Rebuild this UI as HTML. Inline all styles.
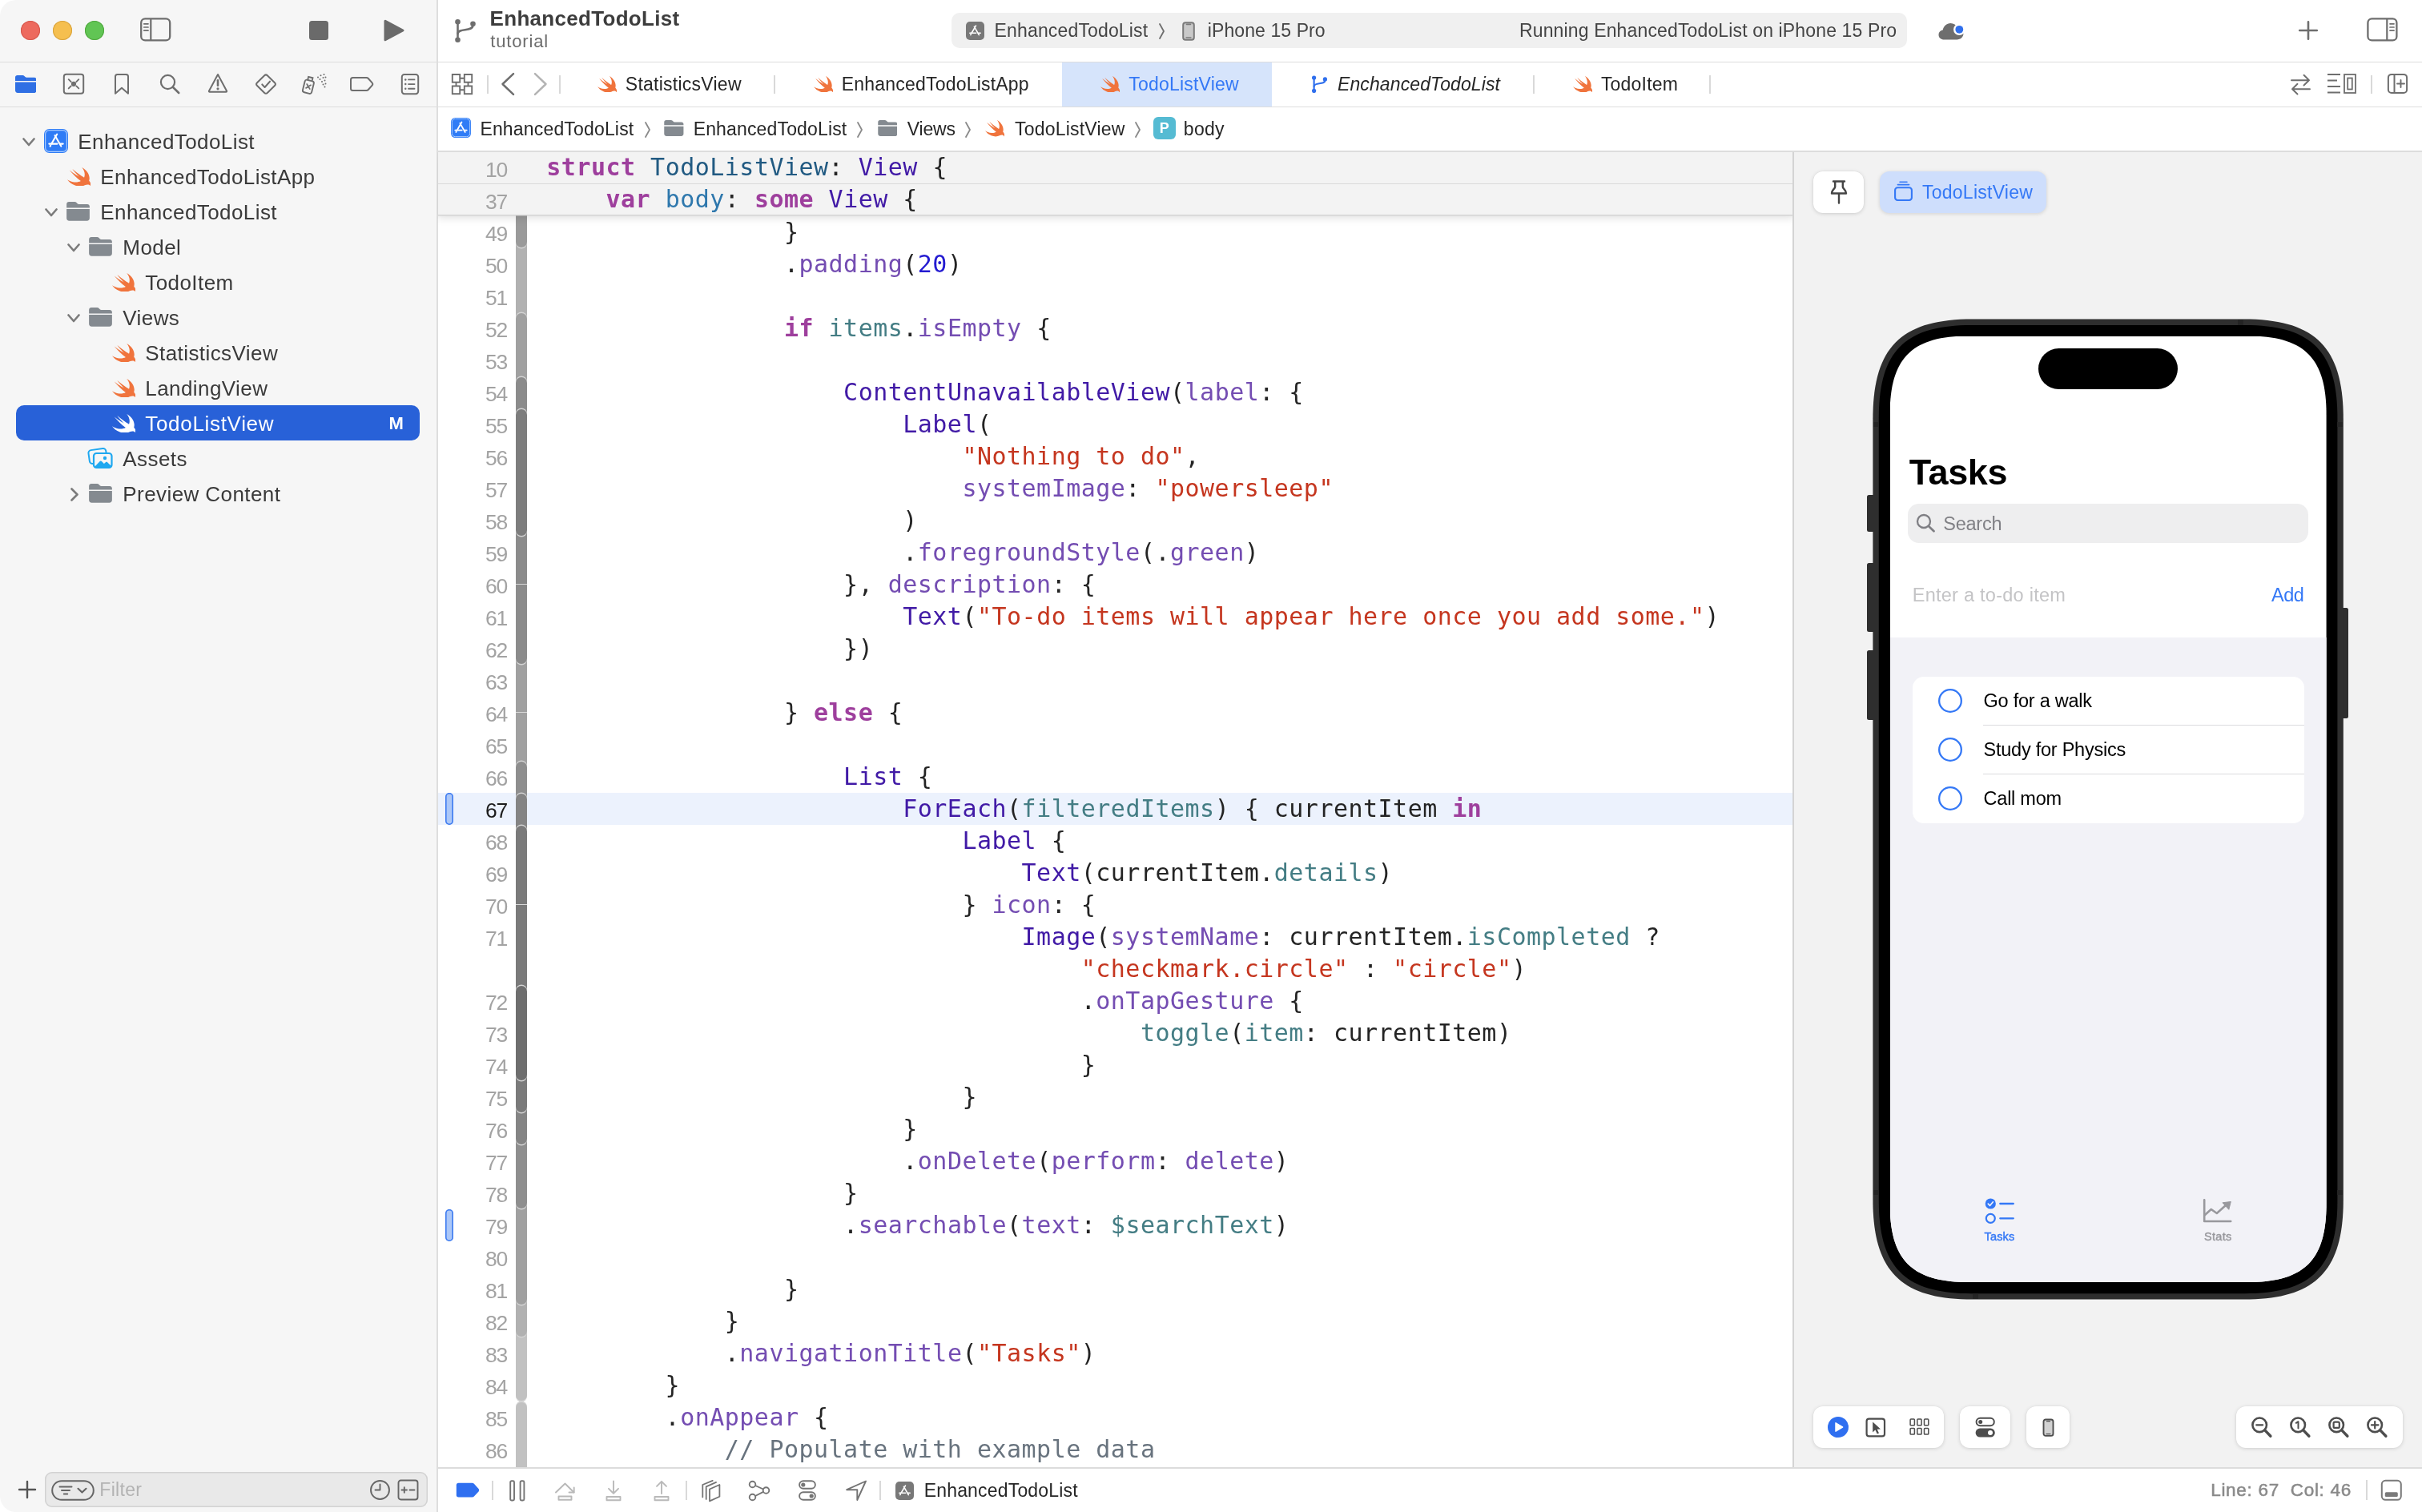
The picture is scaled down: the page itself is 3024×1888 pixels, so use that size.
<!DOCTYPE html>
<html lang="en"><head><meta charset="utf-8"><title>Xcode — TodoListView</title>
<style>
html,body{margin:0;padding:0}
#app{position:absolute;left:0;top:0;width:3024px;height:1888px;will-change:transform}
body{width:3024px;height:1888px;position:relative;overflow:hidden;background:#ffffff;font-family:"Liberation Sans",sans-serif;-webkit-font-smoothing:antialiased}
.cl{position:absolute;font-family:"DejaVu Sans Mono","Liberation Mono",monospace;font-size:30px;line-height:1;letter-spacing:0.479px;color:#242424;white-space:pre}
.ln{position:absolute;left:560px;width:73.200px;text-align:right;font-size:26.500px;line-height:1;color:#a3a3a3;letter-spacing:-1.100px;white-space:pre}
.cl .k{color:#9e3f9d;font-weight:700}
.cl .t{color:#215a82}
.cl .d{color:#2f78ad}
.cl .c{color:#411aa6}
.cl .m{color:#744db2}
.cl .p{color:#447d84}
.cl .s{color:#c5361f}
.cl .n{color:#241bd1}
.cl .x{color:#68737e}
</style></head>
<body>
<div id="app">
<div style="position:absolute;left:0px;top:0px;width:545px;height:1888px;background:#f6f6f6;border-radius:20px 0 0 20px;"></div>
<div style="position:absolute;left:545px;top:0px;width:1.5px;height:1888px;background:#d8d8d8;"></div>
<div style="position:absolute;left:0px;top:76.5px;width:3024px;height:1.5px;background:#dddddd;"></div>
<div style="position:absolute;left:0px;top:132.5px;width:3024px;height:1.5px;background:#dddddd;"></div>
<div style="position:absolute;left:546.5px;top:188.3px;width:2478px;height:1.5px;background:#dddddd;"></div>
<div style="position:absolute;left:545px;top:0px;width:1.5px;height:1888px;background:#dedede;"></div>
<div style="position:absolute;left:25.7px;top:25.7px;width:24.4px;height:24.4px;border-radius:50%;background:#ed6a5e;box-shadow:inset 0 0 0 1px #d5584d;"></div>
<div style="position:absolute;left:65.7px;top:25.7px;width:24.4px;height:24.4px;border-radius:50%;background:#f5bf4f;box-shadow:inset 0 0 0 1px #d8a33e;"></div>
<div style="position:absolute;left:105.7px;top:25.7px;width:24.4px;height:24.4px;border-radius:50%;background:#61c554;box-shadow:inset 0 0 0 1px #50a73f;"></div>
<svg style="position:absolute;left:174px;top:21px;" width="41" height="32" viewBox="0 0 41 32"><rect x="2.2" y="2.400" width="36" height="27" rx="5" fill="none" stroke="#6e6e6e" stroke-width="2.300"/><path d="M14.300 2.400V29.400" stroke="#6e6e6e" stroke-width="2.200"/><path d="M5.800 8.800H11M5.800 13H11M5.800 17.200H11" stroke="#6e6e6e" stroke-width="1.700" stroke-linecap="round"/></svg>
<div style="position:absolute;left:386px;top:25.8px;width:24px;height:24px;background:#6a6a6a;border-radius:3.500px;"></div>
<svg style="position:absolute;left:478px;top:23px;" width="28" height="30" viewBox="0 0 28 30"><path d="M3 3.200L25 15L3 26.800Z" fill="#6a6a6a" stroke="#6a6a6a" stroke-width="3" stroke-linejoin="round"/></svg>
<svg style="position:absolute;left:566.5px;top:22.8px;" width="28" height="31" viewBox="0 0 28 31"><g fill="none" stroke="#6e6e6e" stroke-width="2.6" stroke-linecap="round"><path d="M4.500 6.500V24.500"/><path d="M23.500 8.500C23.500 17 4.500 11.500 4.500 19"/></g><g fill="#6e6e6e"><circle cx="4.500" cy="4.200" r="3.3"/><circle cx="4.500" cy="26.800" r="3.3"/><circle cx="23.500" cy="6.800" r="3.3"/></g></svg>
<span style="position:absolute;left:611.6px;top:10.19px;font-size:26px;line-height:1;color:#3d3d3d;font-weight:700;letter-spacing:0.3px;white-space:pre;">EnhancedTodoList</span>
<span style="position:absolute;left:612.2px;top:40.68px;font-size:22px;line-height:1;color:#6c6c6c;font-weight:400;letter-spacing:0.85px;white-space:pre;">tutorial</span>
<div style="position:absolute;left:1187.8px;top:16px;width:1193.5px;height:43.5px;background:#f0f0f0;border-radius:10px;"></div>
<svg style="position:absolute;left:1206px;top:26.8px;" width="23" height="23" viewBox="0 0 30 30"><rect x="0" y="0" width="30" height="30" rx="6.5" fill="#787878"/><g stroke="#fff" stroke-width="2.1" stroke-linecap="round" fill="none"><path d="M16.2 6.600L9.300 18.600"/><path d="M13.600 8.200L21.300 21.600"/><path d="M6.300 18.600H16.500"/><path d="M20.600 18.600H23.700"/><path d="M8.200 20.600L7.600 21.600"/></g></svg>
<span style="position:absolute;left:1241.6px;top:26.73px;font-size:23px;line-height:1;color:#444444;font-weight:400;letter-spacing:0.15px;white-space:pre;">EnhancedTodoList</span>
<svg style="position:absolute;left:1446.5px;top:28.5px;" width="7" height="20" viewBox="0 0 7 20"><path d="M1 1L6 10L1 19" fill="none" stroke="#6e6e6e" stroke-width="1.800" stroke-linecap="round" stroke-linejoin="round"/></svg>
<svg style="position:absolute;left:1476px;top:26.5px;" width="16" height="24" viewBox="0 0 16 24"><rect x="1.2" y="1.2" width="13.600" height="21.600" rx="3" fill="#c9c9c9" stroke="#7a7a7a" stroke-width="2"/><path d="M5.500 3.400H10.500" stroke="#7a7a7a" stroke-width="1.600" stroke-linecap="round"/><path d="M5 20H11" stroke="#7a7a7a" stroke-width="1.300" stroke-linecap="round"/></svg>
<span style="position:absolute;left:1507.8px;top:26.73px;font-size:23px;line-height:1;color:#444444;font-weight:400;letter-spacing:0.09px;white-space:pre;">iPhone 15 Pro</span>
<span style="position:absolute;left:1897px;top:26.73px;font-size:23px;line-height:1;color:#444444;font-weight:400;letter-spacing:0.14px;white-space:pre;">Running EnhancedTodoList on iPhone 15 Pro</span>
<svg style="position:absolute;left:2419px;top:26px;" width="36" height="26" viewBox="0 0 36 26"><path d="M8.500 23.500C4.300 23.500 1.500 21 1.500 17.500c0-3.100 2.200-5.400 5.200-5.900C7.500 6.600 11.500 3 16.400 3c3.800 0 7 2.100 8.600 5.300 4.300.3 7.500 3.400 7.500 7.500 0 4.400-3.500 7.700-8.200 7.700z" fill="#6e6e6e"/><circle cx="27.300" cy="10.800" r="7.300" fill="#fff"/><circle cx="27.300" cy="10.800" r="4.900" fill="#2f6fed"/></svg>
<svg style="position:absolute;left:2869px;top:25px;" width="26" height="26" viewBox="0 0 26 26"><path d="M13 2.200V23.800M2.200 13H23.800" stroke="#6e6e6e" stroke-width="2.600" stroke-linecap="round"/></svg>
<svg style="position:absolute;left:2954px;top:21px;" width="41" height="32" viewBox="0 0 41 32"><rect x="2.400" y="2.400" width="36" height="27" rx="5" fill="none" stroke="#6e6e6e" stroke-width="2.300"/><path d="M26.300 2.400V29.400" stroke="#6e6e6e" stroke-width="2.200"/><path d="M30 8.800H35M30 13H35M30 17.200H35" stroke="#6e6e6e" stroke-width="1.700" stroke-linecap="round"/></svg>
<svg style="position:absolute;left:18.8px;top:94px;" width="26.5" height="22" viewBox="0 0 29 24"><path d="M3 0h7.2c1 0 1.6.3 2.3 1l1.2 1.2c.5.5 1 .7 1.8.7H26c1.8 0 3 1.2 3 3v1.6H0V3c0-1.8 1.2-3 3-3z M0 9.2h29v11.3c0 2.1-1.3 3.5-3.4 3.5H3.4C1.3 24 0 22.6 0 20.5z" fill="#2f6fe4"/></svg>
<svg style="position:absolute;left:78px;top:91.2px;" width="28" height="28" viewBox="0 0 28 28"><rect x="1.800" y="1.800" width="24.400" height="24" rx="3" fill="none" stroke="#6e6e6e" stroke-width="2"/><path d="M7.700 8.200L10.700 11.200M20.300 8.200L17.300 11.200M7.700 19.400L10.700 16.400M20.300 19.400L17.300 16.400" stroke="#6e6e6e" stroke-width="1.900" stroke-linecap="round"/><circle cx="14" cy="13.800" r="3.100" fill="#6e6e6e"/></svg>
<svg style="position:absolute;left:142px;top:91.2px;" width="20" height="28" viewBox="0 0 20 28"><path d="M2 4.500c0-1.500 1-2.500 2.500-2.500h11c1.500 0 2.500 1 2.500 2.500V25.800L10 18.800 2 25.800z" fill="none" stroke="#6e6e6e" stroke-width="2" stroke-linejoin="round"/></svg>
<svg style="position:absolute;left:199px;top:92px;" width="27" height="26" viewBox="0 0 27 26"><circle cx="10.500" cy="10.500" r="8.600" fill="none" stroke="#6e6e6e" stroke-width="2.200"/><path d="M16.800 16.800L24.200 24" stroke="#6e6e6e" stroke-width="2.600" stroke-linecap="round"/></svg>
<svg style="position:absolute;left:259px;top:91px;" width="26" height="26" viewBox="0 0 26 26"><path d="M13 2L24 22.500c.3.600 0 1.200-.7 1.200H2.700c-.7 0-1-.6-.7-1.200z" fill="none" stroke="#6e6e6e" stroke-width="2" stroke-linejoin="round"/><path d="M13 9.300V15.800" stroke="#6e6e6e" stroke-width="2.600" stroke-linecap="round"/><circle cx="13" cy="19.800" r="1.600" fill="#6e6e6e"/></svg>
<svg style="position:absolute;left:318px;top:91.2px;transform:translateY(0.600px) scaleY(1.035);" width="28" height="27" viewBox="0 0 28 27"><path d="M14 2.200c.7 0 1.200.2 1.800.8l9.400 9c.8.800.8 2.200 0 3l-9.400 9c-.6.600-1.100.8-1.800.8s-1.200-.2-1.800-.8l-9.400-9c-.8-.8-.8-2.200 0-3l9.400-9c.6-.6 1.100-.8 1.800-.8z" fill="none" stroke="#6e6e6e" stroke-width="2"/><path d="M9.300 13.800l3.300 3.400 6.400-7" fill="none" stroke="#6e6e6e" stroke-width="2" stroke-linecap="round" stroke-linejoin="round"/></svg>
<svg style="position:absolute;left:376px;top:91px;" width="33" height="28" viewBox="0 0 33 28"><g transform="rotate(14 10 16)"><rect x="3.500" y="9.500" width="11.500" height="16" rx="2.500" fill="none" stroke="#6e6e6e" stroke-width="1.900"/><path d="M6.500 9V5.500h5.500V9" fill="none" stroke="#6e6e6e" stroke-width="1.900"/><path d="M6.800 14.800l5 5M11.800 14.800l-5 5" stroke="#6e6e6e" stroke-width="1.700" stroke-linecap="round"/></g><g fill="#6e6e6e"><circle cx="21" cy="5.500" r="1"/><circle cx="24.500" cy="3.200" r="1"/><circle cx="28.500" cy="2" r="1"/><circle cx="23.500" cy="8" r="1"/><circle cx="27.500" cy="6" r="1"/><circle cx="30.500" cy="5.500" r="1"/><circle cx="26" cy="11" r="1"/><circle cx="29.500" cy="9.500" r="1"/><circle cx="27.500" cy="14.500" r="1"/><circle cx="30.500" cy="13.500" r="1"/><circle cx="29.500" cy="17.500" r="1"/></g></svg>
<svg style="position:absolute;left:435.5px;top:95px;" width="32" height="20" viewBox="0 0 32 20"><path d="M4.500 2h17c1 0 1.700.3 2.300 1l4.800 5.400c.8.900.8 2.300 0 3.200L23.800 17c-.6.700-1.300 1-2.300 1h-17C3 18 2 17 2 15.500v-11C2 3 3 2 4.500 2z" fill="none" stroke="#6e6e6e" stroke-width="2" stroke-linejoin="round"/></svg>
<svg style="position:absolute;left:500px;top:91.2px;transform:translateY(0.600px) scaleY(1.035);" width="24" height="27" viewBox="0 0 24 27"><rect x="1.800" y="1.800" width="20.400" height="23.400" rx="3" fill="none" stroke="#6e6e6e" stroke-width="2"/><path d="M10 8H17.500M10 13.500H17.500M10 19H17.500" stroke="#6e6e6e" stroke-width="1.800" stroke-linecap="round"/><g fill="#6e6e6e"><circle cx="6.300" cy="8" r="1.200"/><circle cx="6.300" cy="13.500" r="1.200"/><circle cx="6.300" cy="19" r="1.200"/></g></svg>
<svg style="position:absolute;left:563px;top:91.2px;transform:translateY(0.600px) scaleY(1.035);" width="28" height="27" viewBox="0 0 28 27"><g fill="none" stroke="#6e6e6e" stroke-width="1.900"><rect x="1.800" y="1.800" width="9.400" height="9.400"/><rect x="16.800" y="1.800" width="9.400" height="9.400"/><rect x="1.800" y="15.800" width="9.400" height="9.400"/><rect x="16.800" y="15.800" width="9.400" height="9.400"/><path d="M11.200 6.500H16.800M11.200 20.500H16.800M6.500 11.200V15.800M21.500 11.200V15.800"/></g></svg>
<div style="position:absolute;left:608.3px;top:93.6px;width:1.5px;height:23px;background:#d9d9d9;"></div>
<svg style="position:absolute;left:624.5px;top:90px;" width="19" height="30" viewBox="0 0 19 30"><path d="M16 2.200L2.500 15L16 27.800" fill="none" stroke="#6e6e6e" stroke-width="2.500" stroke-linecap="round" stroke-linejoin="round"/></svg>
<svg style="position:absolute;left:664.5px;top:90px;" width="19" height="30" viewBox="0 0 19 30"><path d="M3 2.200L16.500 15L3 27.800" fill="none" stroke="#b4b4b4" stroke-width="2.500" stroke-linecap="round" stroke-linejoin="round"/></svg>
<div style="position:absolute;left:698.2px;top:93.6px;width:1.5px;height:23px;background:#d9d9d9;"></div>
<div style="position:absolute;left:1326px;top:78px;width:262px;height:54.5px;background:#d6e4fb;"></div>
<svg style="position:absolute;left:745.6px;top:94.9px" width="24.3" height="20.5" viewBox="2.411 3.409 18.117 16.213" preserveAspectRatio="none"><path d="M13.543 3.41c4.114 2.47 6.545 7.162 5.549 11.131-.024.093-.05.181-.076.272l.002.001c2.062 2.538 1.5 5.258 1.236 4.745-1.072-2.086-3.066-1.568-4.088-1.043a6.803 6.803 0 0 1-.281.158l-.02.012-.002.002c-2.115 1.123-4.957 1.205-7.812-.022a12.568 12.568 0 0 1-5.64-4.838c.649.48 1.35.902 2.097 1.252 3.019 1.414 6.051 1.311 8.197-.002C9.651 12.73 7.101 9.67 5.146 7.191a10.628 10.628 0 0 1-1.005-1.384c2.34 2.142 6.038 4.83 7.365 5.576C8.69 8.408 6.208 4.743 6.324 4.86c4.436 4.47 8.528 6.996 8.528 6.996.154.085.27.154.36.213.085-.215.16-.437.224-.668.708-2.588-.09-5.548-1.893-7.992z" fill="#f0743d"/></svg>
<span style="position:absolute;left:780.8px;top:93.73px;font-size:23px;line-height:1;color:#262626;font-weight:400;letter-spacing:0.25px;white-space:pre;">StatisticsView</span>
<div style="position:absolute;left:966px;top:93.6px;width:1.5px;height:23px;background:#d9d9d9;"></div>
<svg style="position:absolute;left:1015.6px;top:94.9px" width="24.3" height="20.5" viewBox="2.411 3.409 18.117 16.213" preserveAspectRatio="none"><path d="M13.543 3.41c4.114 2.47 6.545 7.162 5.549 11.131-.024.093-.05.181-.076.272l.002.001c2.062 2.538 1.5 5.258 1.236 4.745-1.072-2.086-3.066-1.568-4.088-1.043a6.803 6.803 0 0 1-.281.158l-.02.012-.002.002c-2.115 1.123-4.957 1.205-7.812-.022a12.568 12.568 0 0 1-5.64-4.838c.649.48 1.35.902 2.097 1.252 3.019 1.414 6.051 1.311 8.197-.002C9.651 12.73 7.101 9.67 5.146 7.191a10.628 10.628 0 0 1-1.005-1.384c2.34 2.142 6.038 4.83 7.365 5.576C8.69 8.408 6.208 4.743 6.324 4.86c4.436 4.47 8.528 6.996 8.528 6.996.154.085.27.154.36.213.085-.215.16-.437.224-.668.708-2.588-.09-5.548-1.893-7.992z" fill="#f0743d"/></svg>
<span style="position:absolute;left:1050.8px;top:93.73px;font-size:23px;line-height:1;color:#262626;font-weight:400;letter-spacing:0.2px;white-space:pre;">EnhancedTodoListApp</span>
<svg style="position:absolute;left:1373.9px;top:94.9px" width="24.3" height="20.5" viewBox="2.411 3.409 18.117 16.213" preserveAspectRatio="none"><path d="M13.543 3.41c4.114 2.47 6.545 7.162 5.549 11.131-.024.093-.05.181-.076.272l.002.001c2.062 2.538 1.5 5.258 1.236 4.745-1.072-2.086-3.066-1.568-4.088-1.043a6.803 6.803 0 0 1-.281.158l-.02.012-.002.002c-2.115 1.123-4.957 1.205-7.812-.022a12.568 12.568 0 0 1-5.64-4.838c.649.48 1.35.902 2.097 1.252 3.019 1.414 6.051 1.311 8.197-.002C9.651 12.73 7.101 9.67 5.146 7.191a10.628 10.628 0 0 1-1.005-1.384c2.34 2.142 6.038 4.83 7.365 5.576C8.69 8.408 6.208 4.743 6.324 4.86c4.436 4.47 8.528 6.996 8.528 6.996.154.085.27.154.36.213.085-.215.16-.437.224-.668.708-2.588-.09-5.548-1.893-7.992z" fill="#f0743d"/></svg>
<span style="position:absolute;left:1409.3px;top:93.73px;font-size:23px;line-height:1;color:#3478f6;font-weight:400;letter-spacing:0.2px;white-space:pre;">TodoListView</span>
<svg style="position:absolute;left:1637.2px;top:93.8px;" width="21" height="22.5" viewBox="0 0 28 31"><g fill="none" stroke="#2f6fed" stroke-width="3" stroke-linecap="round"><path d="M4.500 6.500V24.500"/><path d="M23.500 8.500C23.500 17 4.500 11.500 4.500 19"/></g><g fill="#2f6fed"><circle cx="4.500" cy="4.200" r="3.6"/><circle cx="4.500" cy="26.800" r="3.6"/><circle cx="23.500" cy="6.800" r="3.6"/></g></svg>
<span style="position:absolute;left:1670px;top:93.73px;font-size:23px;line-height:1;color:#262626;font-weight:400;letter-spacing:0.11px;font-style:italic;white-space:pre;">EnchancedTodoList</span>
<div style="position:absolute;left:1914.3px;top:93.6px;width:1.5px;height:23px;background:#d9d9d9;"></div>
<svg style="position:absolute;left:1963.7px;top:94.9px" width="24.3" height="20.5" viewBox="2.411 3.409 18.117 16.213" preserveAspectRatio="none"><path d="M13.543 3.41c4.114 2.47 6.545 7.162 5.549 11.131-.024.093-.05.181-.076.272l.002.001c2.062 2.538 1.5 5.258 1.236 4.745-1.072-2.086-3.066-1.568-4.088-1.043a6.803 6.803 0 0 1-.281.158l-.02.012-.002.002c-2.115 1.123-4.957 1.205-7.812-.022a12.568 12.568 0 0 1-5.64-4.838c.649.48 1.35.902 2.097 1.252 3.019 1.414 6.051 1.311 8.197-.002C9.651 12.73 7.101 9.67 5.146 7.191a10.628 10.628 0 0 1-1.005-1.384c2.34 2.142 6.038 4.83 7.365 5.576C8.69 8.408 6.208 4.743 6.324 4.86c4.436 4.47 8.528 6.996 8.528 6.996.154.085.27.154.36.213.085-.215.16-.437.224-.668.708-2.588-.09-5.548-1.893-7.992z" fill="#f0743d"/></svg>
<span style="position:absolute;left:1998.9px;top:93.73px;font-size:23px;line-height:1;color:#262626;font-weight:400;letter-spacing:0.2px;white-space:pre;">TodoItem</span>
<div style="position:absolute;left:2134.3px;top:93.6px;width:1.5px;height:23px;background:#d9d9d9;"></div>
<svg style="position:absolute;left:2859px;top:91.5px;" width="27" height="27" viewBox="0 0 27 27"><g fill="none" stroke="#6e6e6e" stroke-width="1.900" stroke-linecap="round" stroke-linejoin="round"><path d="M2 8.200H24M17.500 1.800L24 8.200 17.500 14.500"/><path d="M25 19.200H3M9.500 12.800L3 19.200 9.500 25.500"/></g></svg>
<svg style="position:absolute;left:2905px;top:91.2px;" width="38" height="27" viewBox="0 0 38 27"><g fill="none" stroke="#6e6e6e" stroke-width="1.800"><path d="M1 2H17M1 9.500H13M1 17H17M1 24.500H17" /><rect x="22" y="2" width="14" height="23"/><rect x="26.200" y="6.500" width="5.600" height="14"/></g></svg>
<div style="position:absolute;left:2960.2px;top:93.6px;width:1.5px;height:23px;background:#d9d9d9;"></div>
<svg style="position:absolute;left:2979.5px;top:90.8px;" width="27" height="27" viewBox="0 0 27 27"><rect x="1.900" y="1.900" width="23.200" height="23" rx="4" fill="none" stroke="#6e6e6e" stroke-width="2"/><path d="M9.500 2V25" stroke="#6e6e6e" stroke-width="2"/><path d="M17.500 9V18M13 13.500H22" stroke="#6e6e6e" stroke-width="1.900" stroke-linecap="round"/></svg>
<svg style="position:absolute;left:563.3px;top:147.4px;" width="25" height="25" viewBox="0 0 30 30"><rect x="0" y="0" width="30" height="30" rx="6.5" fill="#2f7cf6"/><rect x="1.6" y="1.6" width="26.800" height="26.8" rx="5" fill="none" stroke="#a9ccff" stroke-width="1.2"/><g stroke="#fff" stroke-width="2.1" stroke-linecap="round" fill="none"><path d="M16.2 6.600L9.300 18.600"/><path d="M13.600 8.200L21.300 21.600"/><path d="M6.300 18.600H16.500"/><path d="M20.600 18.600H23.700"/><path d="M8.200 20.600L7.600 21.600"/></g></svg>
<span style="position:absolute;left:599.4px;top:150.13px;font-size:23px;line-height:1;color:#262626;font-weight:400;letter-spacing:0.17px;white-space:pre;">EnhancedTodoList</span>
<svg style="position:absolute;left:804.5px;top:151.5px;" width="7" height="20" viewBox="0 0 7 20"><path d="M1 1L6 10L1 19" fill="none" stroke="#8a8a8a" stroke-width="1.800" stroke-linecap="round" stroke-linejoin="round"/></svg>
<svg style="position:absolute;left:829.3px;top:150px;" width="24.7" height="20" viewBox="0 0 29 24"><path d="M3 0h7.2c1 0 1.6.3 2.3 1l1.2 1.2c.5.5 1 .7 1.8.7H26c1.8 0 3 1.2 3 3v1.6H0V3c0-1.8 1.2-3 3-3z M0 9.2h29v11.3c0 2.1-1.3 3.5-3.4 3.5H3.4C1.3 24 0 22.6 0 20.5z" fill="#848a90"/></svg>
<span style="position:absolute;left:865.7px;top:150.13px;font-size:23px;line-height:1;color:#262626;font-weight:400;letter-spacing:0.15px;white-space:pre;">EnhancedTodoList</span>
<svg style="position:absolute;left:1070px;top:151.5px;" width="7" height="20" viewBox="0 0 7 20"><path d="M1 1L6 10L1 19" fill="none" stroke="#8a8a8a" stroke-width="1.800" stroke-linecap="round" stroke-linejoin="round"/></svg>
<svg style="position:absolute;left:1095.6px;top:150px;" width="24.7" height="20" viewBox="0 0 29 24"><path d="M3 0h7.2c1 0 1.6.3 2.3 1l1.2 1.2c.5.5 1 .7 1.8.7H26c1.8 0 3 1.2 3 3v1.6H0V3c0-1.8 1.2-3 3-3z M0 9.2h29v11.3c0 2.1-1.3 3.5-3.4 3.5H3.4C1.3 24 0 22.6 0 20.5z" fill="#848a90"/></svg>
<span style="position:absolute;left:1132.8px;top:150.13px;font-size:23px;line-height:1;color:#262626;font-weight:400;letter-spacing:-0.2px;white-space:pre;">Views</span>
<svg style="position:absolute;left:1204.5px;top:151.5px;" width="7" height="20" viewBox="0 0 7 20"><path d="M1 1L6 10L1 19" fill="none" stroke="#8a8a8a" stroke-width="1.800" stroke-linecap="round" stroke-linejoin="round"/></svg>
<svg style="position:absolute;left:1229.7px;top:150.4px" width="24.3" height="20.5" viewBox="2.411 3.409 18.117 16.213" preserveAspectRatio="none"><path d="M13.543 3.41c4.114 2.47 6.545 7.162 5.549 11.131-.024.093-.05.181-.076.272l.002.001c2.062 2.538 1.5 5.258 1.236 4.745-1.072-2.086-3.066-1.568-4.088-1.043a6.803 6.803 0 0 1-.281.158l-.02.012-.002.002c-2.115 1.123-4.957 1.205-7.812-.022a12.568 12.568 0 0 1-5.64-4.838c.649.48 1.35.902 2.097 1.252 3.019 1.414 6.051 1.311 8.197-.002C9.651 12.73 7.101 9.67 5.146 7.191a10.628 10.628 0 0 1-1.005-1.384c2.34 2.142 6.038 4.83 7.365 5.576C8.69 8.408 6.208 4.743 6.324 4.86c4.436 4.47 8.528 6.996 8.528 6.996.154.085.27.154.36.213.085-.215.16-.437.224-.668.708-2.588-.09-5.548-1.893-7.992z" fill="#f0743d"/></svg>
<span style="position:absolute;left:1267px;top:150.13px;font-size:23px;line-height:1;color:#262626;font-weight:400;letter-spacing:0.2px;white-space:pre;">TodoListView</span>
<svg style="position:absolute;left:1416.5px;top:151.5px;" width="7" height="20" viewBox="0 0 7 20"><path d="M1 1L6 10L1 19" fill="none" stroke="#8a8a8a" stroke-width="1.800" stroke-linecap="round" stroke-linejoin="round"/></svg>
<div style="position:absolute;left:1440.2px;top:146px;width:27.5px;height:27.5px;background:#55bbd3;border-radius:6px;"></div>
<span style="position:absolute;left:1447.8px;top:150.96px;font-size:18px;line-height:1;color:#ffffff;font-weight:700;white-space:pre;">P</span>
<span style="position:absolute;left:1477.8px;top:150.13px;font-size:23px;line-height:1;color:#262626;font-weight:400;letter-spacing:0.3px;white-space:pre;">body</span>
<svg style="position:absolute;left:28px;top:172px;" width="16" height="10.5" viewBox="0 0 16 10.5"><path d="M1.500 1.500L8.0 9.0L14.5 1.500" fill="none" stroke="#7b7b7b" stroke-width="2.6" stroke-linecap="round" stroke-linejoin="round"/></svg>
<svg style="position:absolute;left:54.5px;top:161.3px;" width="30" height="30" viewBox="0 0 30 30"><rect x="0" y="0" width="30" height="30" rx="6.5" fill="#2f7cf6"/><rect x="1.6" y="1.6" width="26.800" height="26.8" rx="5" fill="none" stroke="#a9ccff" stroke-width="1.2"/><g stroke="#fff" stroke-width="2.1" stroke-linecap="round" fill="none"><path d="M16.2 6.600L9.300 18.600"/><path d="M13.600 8.200L21.300 21.600"/><path d="M6.300 18.600H16.500"/><path d="M20.600 18.600H23.700"/><path d="M8.200 20.600L7.600 21.600"/></g></svg>
<span style="position:absolute;left:97.3px;top:164.29px;font-size:26px;line-height:1;color:#3a3a3a;font-weight:400;letter-spacing:0.42px;white-space:pre;">EnhancedTodoList</span>
<svg style="position:absolute;left:83.5px;top:208.7px" width="29.7" height="23.7" viewBox="2.411 3.409 18.117 16.213" preserveAspectRatio="none"><path d="M13.543 3.41c4.114 2.47 6.545 7.162 5.549 11.131-.024.093-.05.181-.076.272l.002.001c2.062 2.538 1.5 5.258 1.236 4.745-1.072-2.086-3.066-1.568-4.088-1.043a6.803 6.803 0 0 1-.281.158l-.02.012-.002.002c-2.115 1.123-4.957 1.205-7.812-.022a12.568 12.568 0 0 1-5.64-4.838c.649.48 1.35.902 2.097 1.252 3.019 1.414 6.051 1.311 8.197-.002C9.651 12.73 7.101 9.67 5.146 7.191a10.628 10.628 0 0 1-1.005-1.384c2.34 2.142 6.038 4.83 7.365 5.576C8.69 8.408 6.208 4.743 6.324 4.86c4.436 4.47 8.528 6.996 8.528 6.996.154.085.27.154.36.213.085-.215.16-.437.224-.668.708-2.588-.09-5.548-1.893-7.992z" fill="#f0743d"/></svg>
<span style="position:absolute;left:125.3px;top:208.29px;font-size:26px;line-height:1;color:#3a3a3a;font-weight:400;letter-spacing:0.42px;white-space:pre;">EnhancedTodoListApp</span>
<svg style="position:absolute;left:56px;top:260px;" width="16" height="10.5" viewBox="0 0 16 10.5"><path d="M1.500 1.500L8.0 9.0L14.5 1.500" fill="none" stroke="#7b7b7b" stroke-width="2.6" stroke-linecap="round" stroke-linejoin="round"/></svg>
<svg style="position:absolute;left:82.8px;top:252px;" width="29" height="23.8" viewBox="0 0 29 24"><path d="M3 0h7.2c1 0 1.6.3 2.3 1l1.2 1.2c.5.5 1 .7 1.8.7H26c1.8 0 3 1.2 3 3v1.6H0V3c0-1.8 1.2-3 3-3z M0 9.2h29v11.3c0 2.1-1.3 3.5-3.4 3.5H3.4C1.3 24 0 22.6 0 20.5z" fill="#848a90"/></svg>
<span style="position:absolute;left:125.3px;top:252.29px;font-size:26px;line-height:1;color:#3a3a3a;font-weight:400;letter-spacing:0.42px;white-space:pre;">EnhancedTodoList</span>
<svg style="position:absolute;left:84px;top:304px;" width="16" height="10.5" viewBox="0 0 16 10.5"><path d="M1.500 1.500L8.0 9.0L14.5 1.500" fill="none" stroke="#7b7b7b" stroke-width="2.6" stroke-linecap="round" stroke-linejoin="round"/></svg>
<svg style="position:absolute;left:110.8px;top:296px;" width="29" height="23.8" viewBox="0 0 29 24"><path d="M3 0h7.2c1 0 1.6.3 2.3 1l1.2 1.2c.5.5 1 .7 1.8.7H26c1.8 0 3 1.2 3 3v1.6H0V3c0-1.8 1.2-3 3-3z M0 9.2h29v11.3c0 2.1-1.3 3.5-3.4 3.5H3.4C1.3 24 0 22.6 0 20.5z" fill="#848a90"/></svg>
<span style="position:absolute;left:153.3px;top:296.29px;font-size:26px;line-height:1;color:#3a3a3a;font-weight:400;letter-spacing:0.42px;white-space:pre;">Model</span>
<svg style="position:absolute;left:139.5px;top:340.7px" width="29.7" height="23.7" viewBox="2.411 3.409 18.117 16.213" preserveAspectRatio="none"><path d="M13.543 3.41c4.114 2.47 6.545 7.162 5.549 11.131-.024.093-.05.181-.076.272l.002.001c2.062 2.538 1.5 5.258 1.236 4.745-1.072-2.086-3.066-1.568-4.088-1.043a6.803 6.803 0 0 1-.281.158l-.02.012-.002.002c-2.115 1.123-4.957 1.205-7.812-.022a12.568 12.568 0 0 1-5.64-4.838c.649.48 1.35.902 2.097 1.252 3.019 1.414 6.051 1.311 8.197-.002C9.651 12.73 7.101 9.67 5.146 7.191a10.628 10.628 0 0 1-1.005-1.384c2.34 2.142 6.038 4.83 7.365 5.576C8.69 8.408 6.208 4.743 6.324 4.86c4.436 4.47 8.528 6.996 8.528 6.996.154.085.27.154.36.213.085-.215.16-.437.224-.668.708-2.588-.09-5.548-1.893-7.992z" fill="#f0743d"/></svg>
<span style="position:absolute;left:181.3px;top:340.29px;font-size:26px;line-height:1;color:#3a3a3a;font-weight:400;letter-spacing:0.42px;white-space:pre;">TodoItem</span>
<svg style="position:absolute;left:84px;top:392px;" width="16" height="10.5" viewBox="0 0 16 10.5"><path d="M1.500 1.500L8.0 9.0L14.5 1.500" fill="none" stroke="#7b7b7b" stroke-width="2.6" stroke-linecap="round" stroke-linejoin="round"/></svg>
<svg style="position:absolute;left:110.8px;top:384px;" width="29" height="23.8" viewBox="0 0 29 24"><path d="M3 0h7.2c1 0 1.6.3 2.3 1l1.2 1.2c.5.5 1 .7 1.8.7H26c1.8 0 3 1.2 3 3v1.6H0V3c0-1.8 1.2-3 3-3z M0 9.2h29v11.3c0 2.1-1.3 3.5-3.4 3.5H3.4C1.3 24 0 22.6 0 20.5z" fill="#848a90"/></svg>
<span style="position:absolute;left:153.3px;top:384.29px;font-size:26px;line-height:1;color:#3a3a3a;font-weight:400;letter-spacing:0.42px;white-space:pre;">Views</span>
<svg style="position:absolute;left:139.5px;top:428.7px" width="29.7" height="23.7" viewBox="2.411 3.409 18.117 16.213" preserveAspectRatio="none"><path d="M13.543 3.41c4.114 2.47 6.545 7.162 5.549 11.131-.024.093-.05.181-.076.272l.002.001c2.062 2.538 1.5 5.258 1.236 4.745-1.072-2.086-3.066-1.568-4.088-1.043a6.803 6.803 0 0 1-.281.158l-.02.012-.002.002c-2.115 1.123-4.957 1.205-7.812-.022a12.568 12.568 0 0 1-5.64-4.838c.649.48 1.35.902 2.097 1.252 3.019 1.414 6.051 1.311 8.197-.002C9.651 12.73 7.101 9.67 5.146 7.191a10.628 10.628 0 0 1-1.005-1.384c2.34 2.142 6.038 4.83 7.365 5.576C8.69 8.408 6.208 4.743 6.324 4.86c4.436 4.47 8.528 6.996 8.528 6.996.154.085.27.154.36.213.085-.215.16-.437.224-.668.708-2.588-.09-5.548-1.893-7.992z" fill="#f0743d"/></svg>
<span style="position:absolute;left:181.3px;top:428.29px;font-size:26px;line-height:1;color:#3a3a3a;font-weight:400;letter-spacing:0.42px;white-space:pre;">StatisticsView</span>
<svg style="position:absolute;left:139.5px;top:472.7px" width="29.7" height="23.7" viewBox="2.411 3.409 18.117 16.213" preserveAspectRatio="none"><path d="M13.543 3.41c4.114 2.47 6.545 7.162 5.549 11.131-.024.093-.05.181-.076.272l.002.001c2.062 2.538 1.5 5.258 1.236 4.745-1.072-2.086-3.066-1.568-4.088-1.043a6.803 6.803 0 0 1-.281.158l-.02.012-.002.002c-2.115 1.123-4.957 1.205-7.812-.022a12.568 12.568 0 0 1-5.64-4.838c.649.48 1.35.902 2.097 1.252 3.019 1.414 6.051 1.311 8.197-.002C9.651 12.73 7.101 9.67 5.146 7.191a10.628 10.628 0 0 1-1.005-1.384c2.34 2.142 6.038 4.83 7.365 5.576C8.69 8.408 6.208 4.743 6.324 4.86c4.436 4.47 8.528 6.996 8.528 6.996.154.085.27.154.36.213.085-.215.16-.437.224-.668.708-2.588-.09-5.548-1.893-7.992z" fill="#f0743d"/></svg>
<span style="position:absolute;left:181.3px;top:472.29px;font-size:26px;line-height:1;color:#3a3a3a;font-weight:400;letter-spacing:0.42px;white-space:pre;">LandingView</span>
<div style="position:absolute;left:20px;top:506px;width:504px;height:44px;background:#2861d8;border-radius:10px;"></div>
<span style="position:absolute;left:485.6px;top:517.88px;font-size:22px;line-height:1;color:#ffffff;font-weight:700;white-space:pre;">M</span>
<svg style="position:absolute;left:139.5px;top:516.7px" width="29.7" height="23.7" viewBox="2.411 3.409 18.117 16.213" preserveAspectRatio="none"><path d="M13.543 3.41c4.114 2.47 6.545 7.162 5.549 11.131-.024.093-.05.181-.076.272l.002.001c2.062 2.538 1.5 5.258 1.236 4.745-1.072-2.086-3.066-1.568-4.088-1.043a6.803 6.803 0 0 1-.281.158l-.02.012-.002.002c-2.115 1.123-4.957 1.205-7.812-.022a12.568 12.568 0 0 1-5.64-4.838c.649.48 1.35.902 2.097 1.252 3.019 1.414 6.051 1.311 8.197-.002C9.651 12.73 7.101 9.67 5.146 7.191a10.628 10.628 0 0 1-1.005-1.384c2.34 2.142 6.038 4.83 7.365 5.576C8.69 8.408 6.208 4.743 6.324 4.86c4.436 4.47 8.528 6.996 8.528 6.996.154.085.27.154.36.213.085-.215.16-.437.224-.668.708-2.588-.09-5.548-1.893-7.992z" fill="#ffffff"/></svg>
<span style="position:absolute;left:181.3px;top:516.29px;font-size:26px;line-height:1;color:#ffffff;font-weight:400;letter-spacing:0.68px;white-space:pre;">TodoListView</span>
<svg style="position:absolute;left:109.0px;top:559px;" width="32" height="27" viewBox="0 0 32 27"><rect x="2" y="2" width="22" height="17" rx="3.500" fill="#f6f6f6" stroke="#1fa8f0" stroke-width="2" transform="rotate(-8 13 10)"/><rect x="8" y="7" width="22.500" height="18" rx="3.500" fill="#f6f6f6" stroke="#1fa8f0" stroke-width="2.200"/><path d="M9.500 23.500l6.200-6.500c.7-.7 1.500-.7 2.200 0l3 3 2-1.800c.7-.6 1.500-.6 2.200 0L29.500 22.500V23c0 .8-.5 1.300-1.300 1.300H10.500c-.5 0-.9-.3-1-.8z" fill="#1fa8f0"/><circle cx="22" cy="13" r="2.200" fill="#1fa8f0"/></svg>
<span style="position:absolute;left:153.3px;top:560.29px;font-size:26px;line-height:1;color:#3a3a3a;font-weight:400;letter-spacing:0.42px;white-space:pre;">Assets</span>
<svg style="position:absolute;left:88px;top:608.5px;" width="10" height="17" viewBox="0 0 10 17"><path d="M1.500 1.500L8.5 8.5L1.500 15.5" fill="none" stroke="#7b7b7b" stroke-width="2.6" stroke-linecap="round" stroke-linejoin="round"/></svg>
<svg style="position:absolute;left:110.8px;top:604px;" width="29" height="23.8" viewBox="0 0 29 24"><path d="M3 0h7.2c1 0 1.6.3 2.3 1l1.2 1.2c.5.5 1 .7 1.8.7H26c1.8 0 3 1.2 3 3v1.6H0V3c0-1.8 1.2-3 3-3z M0 9.2h29v11.3c0 2.1-1.3 3.5-3.4 3.5H3.4C1.3 24 0 22.6 0 20.5z" fill="#848a90"/></svg>
<span style="position:absolute;left:153.3px;top:604.29px;font-size:26px;line-height:1;color:#3a3a3a;font-weight:400;letter-spacing:0.42px;white-space:pre;">Preview Content</span>
<svg style="position:absolute;left:22px;top:1848px;" width="24" height="24" viewBox="0 0 24 24"><path d="M12 2V22M2 12H22" stroke="#555" stroke-width="2.400" stroke-linecap="round"/></svg>
<div style="position:absolute;left:56px;top:1837.8px;width:477.5px;height:44px;background:#e9e9e9;border-radius:9px;box-shadow:inset 0 0 0 1.500px #d2d2d2;"></div>
<svg style="position:absolute;left:64px;top:1847.5px;" width="54" height="26" viewBox="0 0 54 26"><rect x="1.200" y="1.200" width="51.600" height="23.600" rx="11.800" fill="none" stroke="#666" stroke-width="2"/><path d="M10.500 8.500H25.500M13 13H23M15.800 17.500H20.200" stroke="#666" stroke-width="2" stroke-linecap="round"/><path d="M33.500 10.800L38.500 15.500L43.500 10.800" fill="none" stroke="#666" stroke-width="2.200" stroke-linecap="round" stroke-linejoin="round"/></svg>
<span style="position:absolute;left:124.3px;top:1848.83px;font-size:23px;line-height:1;color:#b3b3b3;font-weight:400;letter-spacing:0.3px;white-space:pre;">Filter</span>
<svg style="position:absolute;left:461px;top:1847px;" width="27" height="27" viewBox="0 0 27 27"><circle cx="13.500" cy="13.500" r="11.500" fill="none" stroke="#666" stroke-width="1.900"/><path d="M13.500 6.500V13.500H7.500" fill="none" stroke="#666" stroke-width="1.900" stroke-linecap="round" stroke-linejoin="round"/></svg>
<svg style="position:absolute;left:495.5px;top:1847px;" width="27" height="27" viewBox="0 0 27 27"><rect x="1.500" y="1.500" width="24" height="24" rx="3" fill="none" stroke="#666" stroke-width="1.900"/><path d="M5.500 13.500H12M8.800 10.200V16.800M15.500 13.500H21.500" stroke="#666" stroke-width="1.900" stroke-linecap="round"/></svg>
<div style="position:absolute;left:546.5px;top:990px;width:1692px;height:40px;background:#ecf2fd;"></div>
<div style="position:absolute;left:556px;top:990.3px;width:10px;height:39.4px;background:#abc7f8;border-radius:5px;box-shadow:inset 0 0 0 1.600px #3d7bf0;"></div>
<div style="position:absolute;left:556px;top:1510.3px;width:10px;height:39.4px;background:#abc7f8;border-radius:5px;box-shadow:inset 0 0 0 1.600px #3d7bf0;"></div>
<div style="position:absolute;left:644px;top:268px;width:14px;height:1481px;background:#c1c1c1;border-radius:0px 0px 7px 7px;box-shadow:0 1.500px 0 0 #d4d4d4;"></div>
<div style="position:absolute;left:644px;top:1751px;width:14px;height:81px;background:#c1c1c1;border-radius:7px 7px 0px 0px;box-shadow:0 -1.500px 0 0 #d4d4d4;"></div>
<div style="position:absolute;left:644px;top:268px;width:14px;height:1401px;background:#b1b1b1;border-radius:0px 0px 7px 7px;box-shadow:0 1.500px 0 0 #d4d4d4;"></div>
<div style="position:absolute;left:644px;top:268px;width:14px;height:41px;background:#9a9a9a;border-radius:0px 0px 7px 7px;box-shadow:0 1.500px 0 0 #d4d4d4;"></div>
<div style="position:absolute;left:644px;top:391px;width:14px;height:1238px;background:#a0a0a0;border-radius:7px 7px 7px 7px;box-shadow:0 -1.500px 0 0 #d4d4d4,0 1.500px 0 0 #d4d4d4;"></div>
<div style="position:absolute;left:644px;top:471px;width:14px;height:358px;background:#8b8b8b;border-radius:7px 7px 7px 7px;box-shadow:0 -1.500px 0 0 #d4d4d4,0 1.500px 0 0 #d4d4d4;"></div>
<div style="position:absolute;left:644px;top:511px;width:14px;height:158px;background:#7d7d7d;border-radius:7px 7px 7px 7px;box-shadow:0 -1.500px 0 0 #d4d4d4,0 1.500px 0 0 #d4d4d4;"></div>
<div style="position:absolute;left:644px;top:951px;width:14px;height:558px;background:#8e8e8e;border-radius:7px 7px 7px 7px;box-shadow:0 -1.500px 0 0 #d4d4d4,0 1.500px 0 0 #d4d4d4;"></div>
<div style="position:absolute;left:644px;top:991px;width:14px;height:438px;background:#848484;border-radius:7px 7px 7px 7px;box-shadow:0 -1.500px 0 0 #d4d4d4,0 1.500px 0 0 #d4d4d4;"></div>
<div style="position:absolute;left:644px;top:1031px;width:14px;height:358px;background:#7a7a7a;border-radius:7px 7px 7px 7px;box-shadow:0 -1.500px 0 0 #d4d4d4,0 1.500px 0 0 #d4d4d4;"></div>
<div style="position:absolute;left:644px;top:1231px;width:14px;height:118px;background:#6e6e6e;border-radius:7px 7px 7px 7px;box-shadow:0 -1.500px 0 0 #d4d4d4,0 1.500px 0 0 #d4d4d4;"></div>
<div style="position:absolute;left:644px;top:728.5px;width:14px;height:1.5px;background:#d8d8d8;"></div>
<div style="position:absolute;left:644px;top:888.5px;width:14px;height:1.5px;background:#d8d8d8;"></div>
<div style="position:absolute;left:644px;top:1128.5px;width:14px;height:1.5px;background:#d8d8d8;"></div>
<span class="ln" style="top:279.07px">49</span>
<div class="cl" style="left:978.94px;top:274.82px">}</div>
<span class="ln" style="top:319.07px">50</span>
<div class="cl" style="left:978.94px;top:314.82px">.<span class="m">padding</span>(<span class="n">20</span>)</div>
<span class="ln" style="top:359.07px">51</span>
<span class="ln" style="top:399.07px">52</span>
<div class="cl" style="left:978.94px;top:394.82px"><span class="k">if</span> <span class="p">items</span>.<span class="m">isEmpty</span> {</div>
<span class="ln" style="top:439.07px">53</span>
<span class="ln" style="top:479.07px">54</span>
<div class="cl" style="left:1053.10px;top:474.82px"><span class="c">ContentUnavailableView</span>(<span class="m">label</span>: {</div>
<span class="ln" style="top:519.07px">55</span>
<div class="cl" style="left:1127.26px;top:514.82px"><span class="c">Label</span>(</div>
<span class="ln" style="top:559.07px">56</span>
<div class="cl" style="left:1201.42px;top:554.82px"><span class="s">&quot;Nothing to do&quot;</span>,</div>
<span class="ln" style="top:599.07px">57</span>
<div class="cl" style="left:1201.42px;top:594.82px"><span class="m">systemImage</span>: <span class="s">&quot;powersleep&quot;</span></div>
<span class="ln" style="top:639.07px">58</span>
<div class="cl" style="left:1127.26px;top:634.82px">)</div>
<span class="ln" style="top:679.07px">59</span>
<div class="cl" style="left:1127.26px;top:674.82px">.<span class="m">foregroundStyle</span>(.<span class="m">green</span>)</div>
<span class="ln" style="top:719.07px">60</span>
<div class="cl" style="left:1053.10px;top:714.82px">}, <span class="m">description</span>: {</div>
<span class="ln" style="top:759.07px">61</span>
<div class="cl" style="left:1127.26px;top:754.82px"><span class="c">Text</span>(<span class="s">&quot;To-do items will appear here once you add some.&quot;</span>)</div>
<span class="ln" style="top:799.07px">62</span>
<div class="cl" style="left:1053.10px;top:794.82px">})</div>
<span class="ln" style="top:839.07px">63</span>
<span class="ln" style="top:879.07px">64</span>
<div class="cl" style="left:978.94px;top:874.82px">} <span class="k">else</span> {</div>
<span class="ln" style="top:919.07px">65</span>
<span class="ln" style="top:959.07px">66</span>
<div class="cl" style="left:1053.10px;top:954.82px"><span class="c">List</span> {</div>
<span class="ln" style="top:999.07px;color:#1c1c1c">67</span>
<div class="cl" style="left:1127.26px;top:994.82px"><span class="c">ForEach</span>(<span class="p">filteredItems</span>) { currentItem <span class="k">in</span></div>
<span class="ln" style="top:1039.07px">68</span>
<div class="cl" style="left:1201.42px;top:1034.82px"><span class="c">Label</span> {</div>
<span class="ln" style="top:1079.07px">69</span>
<div class="cl" style="left:1275.58px;top:1074.82px"><span class="c">Text</span>(currentItem.<span class="p">details</span>)</div>
<span class="ln" style="top:1119.07px">70</span>
<div class="cl" style="left:1201.42px;top:1114.82px">} <span class="m">icon</span>: {</div>
<span class="ln" style="top:1159.07px">71</span>
<div class="cl" style="left:1275.58px;top:1154.82px"><span class="c">Image</span>(<span class="m">systemName</span>: currentItem.<span class="p">isCompleted</span> ?</div>
<div class="cl" style="left:1349.74px;top:1194.82px"><span class="s">&quot;checkmark.circle&quot;</span> : <span class="s">&quot;circle&quot;</span>)</div>
<span class="ln" style="top:1239.07px">72</span>
<div class="cl" style="left:1349.74px;top:1234.82px">.<span class="m">onTapGesture</span> {</div>
<span class="ln" style="top:1279.07px">73</span>
<div class="cl" style="left:1423.90px;top:1274.82px"><span class="p">toggle</span>(<span class="p">item</span>: currentItem)</div>
<span class="ln" style="top:1319.07px">74</span>
<div class="cl" style="left:1349.74px;top:1314.82px">}</div>
<span class="ln" style="top:1359.07px">75</span>
<div class="cl" style="left:1201.42px;top:1354.82px">}</div>
<span class="ln" style="top:1399.07px">76</span>
<div class="cl" style="left:1127.26px;top:1394.82px">}</div>
<span class="ln" style="top:1439.07px">77</span>
<div class="cl" style="left:1127.26px;top:1434.82px">.<span class="m">onDelete</span>(<span class="m">perform</span>: <span class="m">delete</span>)</div>
<span class="ln" style="top:1479.07px">78</span>
<div class="cl" style="left:1053.10px;top:1474.82px">}</div>
<span class="ln" style="top:1519.07px">79</span>
<div class="cl" style="left:1053.10px;top:1514.82px">.<span class="m">searchable</span>(<span class="m">text</span>: <span class="p">$searchText</span>)</div>
<span class="ln" style="top:1559.07px">80</span>
<span class="ln" style="top:1599.07px">81</span>
<div class="cl" style="left:978.94px;top:1594.82px">}</div>
<span class="ln" style="top:1639.07px">82</span>
<div class="cl" style="left:904.78px;top:1634.82px">}</div>
<span class="ln" style="top:1679.07px">83</span>
<div class="cl" style="left:904.78px;top:1674.82px">.<span class="m">navigationTitle</span>(<span class="s">&quot;Tasks&quot;</span>)</div>
<span class="ln" style="top:1719.07px">84</span>
<div class="cl" style="left:830.62px;top:1714.82px">}</div>
<span class="ln" style="top:1759.07px">85</span>
<div class="cl" style="left:830.62px;top:1754.82px">.<span class="m">onAppear</span> {</div>
<span class="ln" style="top:1799.07px">86</span>
<div class="cl" style="left:904.78px;top:1794.82px"><span class="x">// Populate with example data</span></div>
<div style="position:absolute;left:546.5px;top:190px;width:1692px;height:78px;background:#f3f3f3;box-shadow:0 1px 0 0.500px #d4d4d4, 0 3px 10px 1px rgba(0,0,0,0.13);clip-path:inset(0 0 -40px 0);"></div>
<div style="position:absolute;left:546.5px;top:228.5px;width:1692px;height:1.5px;background:#d9d9d9;"></div>
<span class="ln" style="top:199.07px">10</span>
<div class="cl" style="left:682.30px;top:194.42px"><span class="k">struct</span> <span class="t">TodoListView</span>: <span class="c">View</span> {</div>
<span class="ln" style="top:239.07px">37</span>
<div class="cl" style="left:756.46px;top:234.42px"><span class="k">var</span> <span class="d">body</span>: <span class="k">some</span> <span class="c">View</span> {</div>
<div style="position:absolute;left:2239.5px;top:189.8px;width:785px;height:1642.7px;background:#f2f2f2;"></div>
<div style="position:absolute;left:2238.2px;top:189.8px;width:1.5px;height:1642.7px;background:#d4d4d4;"></div>
<div style="position:absolute;left:2264px;top:214px;width:63.3px;height:52px;background:#ffffff;border-radius:12px;box-shadow:0 1px 5px rgba(0,0,0,0.15),0 0 0 0.500px rgba(0,0,0,0.03);"></div>
<svg style="position:absolute;left:2284px;top:224px;" width="24" height="32" viewBox="0 0 24 32"><g fill="none" stroke="#454545" stroke-width="2.400" stroke-linecap="round" stroke-linejoin="round"><path d="M5 2.500H19M7.200 2.500V9.500C7.200 11.500 3 13 3 17.500H21C21 13 16.800 11.500 16.800 9.500V2.500M12 17.500V29.500"/></g></svg>
<div style="position:absolute;left:2347.2px;top:214px;width:207.8px;height:52px;background:#cedefc;border-radius:12px;box-shadow:0 1px 5px rgba(0,0,0,0.14);"></div>
<svg style="position:absolute;left:2363.5px;top:226px;" width="25" height="26" viewBox="0 0 25 26"><g fill="none" stroke="#3478f6" stroke-linecap="round"><rect x="2.100" y="8.200" width="20.800" height="15.800" rx="3.200" stroke-width="2.100"/><path d="M5.500 4.600H19.500" stroke-width="1.800"/><path d="M8 1.300H17" stroke-width="1.500"/></g></svg>
<span style="position:absolute;left:2400px;top:228.93px;font-size:23px;line-height:1;color:#3478f6;font-weight:400;letter-spacing:0.25px;white-space:pre;">TodoListView</span>
<div style="position:absolute;left:2331px;top:618px;width:10px;height:45.5px;background:#2e2e2e;border-radius:2.500px;"></div>
<div style="position:absolute;left:2331px;top:703px;width:10px;height:85.70000000000005px;background:#2e2e2e;border-radius:2.500px;"></div>
<div style="position:absolute;left:2331px;top:812.4px;width:10px;height:86.60000000000002px;background:#2e2e2e;border-radius:2.500px;"></div>
<div style="position:absolute;left:2923px;top:758.7px;width:9px;height:138px;background:#2e2e2e;border-radius:2.500px;"></div>
<svg style="position:absolute;left:2330px;top:390px;" width="610" height="1245" viewBox="0 0 610 1245"><path d="M132.86 8.60H471.34C560.75 8.60 595.80 43.65 595.80 133.06V1108.14C595.80 1197.55 560.75 1232.60 471.34 1232.60H132.86C43.45 1232.60 8.40 1197.55 8.40 1108.14V133.06C8.40 43.65 43.45 8.60 132.86 8.60Z" fill="#2e2e2e"/><path d="M131.37 16.00H472.83C555.85 16.00 588.40 48.55 588.40 131.57V1109.63C588.40 1192.65 555.85 1225.20 472.83 1225.20H131.37C48.35 1225.20 15.80 1192.65 15.80 1109.63V131.57C15.80 48.55 48.35 16.00 131.37 16.00Z" fill="#000"/></svg>
<div style="position:absolute;left:2339px;top:527px;width:6.8px;height:6px;background:#242424;"></div>
<div style="position:absolute;left:2918.4px;top:527px;width:6.8px;height:6px;background:#242424;"></div>
<div style="position:absolute;left:2339px;top:1486px;width:6.8px;height:6px;background:#242424;"></div>
<div style="position:absolute;left:2918.4px;top:1486px;width:6.8px;height:6px;background:#242424;"></div>
<div style="position:absolute;left:2794px;top:399.2px;width:7px;height:6.8px;background:#242424;"></div>
<div style="position:absolute;left:2463px;top:1615.2px;width:7px;height:6.8px;background:#242424;"></div>
<div style="position:absolute;left:2359.6px;top:419.6px;width:545px;height:1181.4px;background:#fff;clip-path:path('M97.79 0.00H447.21C517.46 0.00 545.00 27.54 545.00 97.79V1083.61C545.00 1153.86 517.46 1181.40 447.21 1181.40H97.79C27.54 1181.40 0.00 1153.86 0.00 1083.61V97.79C0.00 27.54 27.54 0.00 97.79 0.00Z');overflow:hidden;"><div style="position:absolute;left:0px;top:376.4px;width:545px;height:805.0000000000001px;background:#f2f2f7;"></div><div style="position:absolute;left:185.80000000000018px;top:15.899999999999977px;width:174px;height:51px;background:#000;border-radius:25.500px;"></div><span style="position:absolute;left:24.200000000000273px;top:147.21px;font-size:45px;line-height:1;color:#000;font-weight:700;letter-spacing:-0.4px;white-space:pre;">Tasks</span><div style="position:absolute;left:22.800000000000182px;top:209.60000000000002px;width:500px;height:48.8px;background:#eeeeef;border-radius:14px;"></div><svg style="position:absolute;left:32.40000000000009px;top:221.69999999999993px;" width="25" height="24" viewBox="0 0 25 24"><circle cx="10" cy="10" r="8" fill="none" stroke="#7f7f84" stroke-width="2.300"/><path d="M16 16L22.500 22.300" stroke="#7f7f84" stroke-width="2.700" stroke-linecap="round"/></svg><span style="position:absolute;left:66.70000000000027px;top:223.81px;font-size:23.5px;line-height:1;color:#808085;font-weight:400;letter-spacing:-0.25px;white-space:pre;">Search</span><span style="position:absolute;left:28.200000000000273px;top:312.81px;font-size:23.5px;line-height:1;color:#c4c4c6;font-weight:400;letter-spacing:0.25px;white-space:pre;">Enter a to-do item</span><span style="position:absolute;left:476.4000000000001px;top:312.81px;font-size:23.5px;line-height:1;color:#3478f6;font-weight:400;letter-spacing:-0.5px;white-space:pre;">Add</span><div style="position:absolute;left:28.5px;top:425.4px;width:489.3px;height:183px;background:#fff;border-radius:14px;"></div><div style="position:absolute;left:60.40000000000009px;top:440.79999999999995px;width:30px;height:30px;border-radius:50%;box-shadow:inset 0 0 0 2.300px #3478f6;"></div><span style="position:absolute;left:117.0px;top:444.21px;font-size:23.5px;line-height:1;color:#000;font-weight:400;letter-spacing:-0.25px;white-space:pre;">Go for a walk</span><div style="position:absolute;left:116.59999999999991px;top:485.79999999999995px;width:401.2px;height:1px;background:#dcdcde;"></div><div style="position:absolute;left:60.40000000000009px;top:501.79999999999995px;width:30px;height:30px;border-radius:50%;box-shadow:inset 0 0 0 2.300px #3478f6;"></div><span style="position:absolute;left:117.0px;top:505.21px;font-size:23.5px;line-height:1;color:#000;font-weight:400;letter-spacing:-0.25px;white-space:pre;">Study for Physics</span><div style="position:absolute;left:116.59999999999991px;top:546.8px;width:401.2px;height:1px;background:#dcdcde;"></div><div style="position:absolute;left:60.40000000000009px;top:562.8px;width:30px;height:30px;border-radius:50%;box-shadow:inset 0 0 0 2.300px #3478f6;"></div><span style="position:absolute;left:117.0px;top:566.21px;font-size:23.5px;line-height:1;color:#000;font-weight:400;letter-spacing:-0.25px;white-space:pre;">Call mom</span><svg style="position:absolute;left:118.5px;top:1075.4px;" width="38" height="34" viewBox="0 0 38 34"><circle cx="7.300" cy="8" r="6.600" fill="#3478f6"/><path d="M4.300 8.200L6.500 10.500L10.400 5.800" fill="none" stroke="#f2f2f7" stroke-width="1.700" stroke-linecap="round" stroke-linejoin="round"/><circle cx="7.300" cy="26.300" r="5.500" fill="none" stroke="#3478f6" stroke-width="2.200"/><path d="M19.300 8H35.800M19.300 26.300H35.800" stroke="#3478f6" stroke-width="2.300" stroke-linecap="round"/></svg><span style="position:absolute;left:118.0px;top:1117.33px;font-size:14.5px;line-height:1;color:#3478f6;font-weight:400;letter-spacing:0.15px;white-space:pre;-webkit-text-stroke:0.450px #3478f6;">Tasks</span><svg style="position:absolute;left:390.9000000000001px;top:1075.9px;" width="38" height="33" viewBox="0 0 38 33"><g fill="none" stroke="#98989d" stroke-linecap="round" stroke-linejoin="round"><path d="M2.200 3.300V30H35.200" stroke-width="2.600"/><path d="M3 22L10.800 15L17.800 20L29 10" stroke-width="2.600"/></g><path d="M25 6.800L35.300 5.500L32.800 15.300Z" fill="#98989d" stroke="#98989d" stroke-width="1" stroke-linejoin="round"/></svg><span style="position:absolute;left:392.4000000000001px;top:1117.33px;font-size:14.5px;line-height:1;color:#98989d;font-weight:400;letter-spacing:0.3px;white-space:pre;-webkit-text-stroke:0.450px #98989d;">Stats</span></div>
<div style="position:absolute;left:2263.8px;top:1755.7px;width:163.2px;height:52.5px;background:#fff;border-radius:12px;box-shadow:0 1px 5px rgba(0,0,0,0.14),0 0 0 0.500px rgba(0,0,0,0.03);"></div>
<div style="position:absolute;left:2446.7px;top:1755.7px;width:63.3px;height:52.5px;background:#fff;border-radius:12px;box-shadow:0 1px 5px rgba(0,0,0,0.14),0 0 0 0.500px rgba(0,0,0,0.03);"></div>
<div style="position:absolute;left:2530px;top:1755.7px;width:54px;height:52.5px;background:#fff;border-radius:12px;box-shadow:0 1px 5px rgba(0,0,0,0.14),0 0 0 0.500px rgba(0,0,0,0.03);"></div>
<div style="position:absolute;left:2792px;top:1755.7px;width:207.8px;height:52.5px;background:#fff;border-radius:12px;box-shadow:0 1px 5px rgba(0,0,0,0.14),0 0 0 0.500px rgba(0,0,0,0.03);"></div>
<div style="position:absolute;left:2281.8px;top:1768.9px;width:26.2px;height:26.2px;background:#2f6ff0;border-radius:50%;"></div>
<svg style="position:absolute;left:2289.5px;top:1775px;" width="12" height="14" viewBox="0 0 12 14"><path d="M2 1.800L10.500 7L2 12.200Z" fill="#fff" stroke="#fff" stroke-width="1.500" stroke-linejoin="round"/></svg>
<svg style="position:absolute;left:2329px;top:1769.5px;" width="26" height="26" viewBox="0 0 26 26"><rect x="1.600" y="1.600" width="22.400" height="21.800" rx="3" fill="none" stroke="#4d4d4d" stroke-width="2.200"/><path d="M9.200 5.500V18.500L12.400 15.500L14.800 20.600L17 19.600L14.700 14.700L19 14.400Z" fill="#4d4d4d"/></svg>
<svg style="position:absolute;left:2383.5px;top:1771.3px;" width="26" height="22" viewBox="0 0 26 22"><rect x="1.1" y="1.1" width="5.300" height="7.700" rx="0.900" fill="none" stroke="#4d4d4d" stroke-width="1.500"/><rect x="1.1" y="12.4" width="5.300" height="7.700" rx="0.900" fill="none" stroke="#4d4d4d" stroke-width="1.500"/><rect x="9.799999999999999" y="1.1" width="5.300" height="7.700" rx="0.900" fill="none" stroke="#4d4d4d" stroke-width="1.500"/><rect x="9.799999999999999" y="12.4" width="5.300" height="7.700" rx="0.900" fill="none" stroke="#4d4d4d" stroke-width="1.500"/><rect x="18.5" y="1.1" width="5.300" height="7.700" rx="0.900" fill="none" stroke="#4d4d4d" stroke-width="1.500"/><rect x="18.5" y="12.4" width="5.300" height="7.700" rx="0.900" fill="none" stroke="#4d4d4d" stroke-width="1.500"/></svg>
<svg style="position:absolute;left:2465.5px;top:1769px;" width="26" height="27" viewBox="0 0 26 27"><rect x="1.600" y="1.800" width="22.200" height="9.400" rx="4.700" fill="none" stroke="#4d4d4d" stroke-width="2"/><circle cx="6.700" cy="6.500" r="2.500" fill="#4d4d4d"/><rect x="0.600" y="14.600" width="24.200" height="11" rx="5.500" fill="#4d4d4d"/><circle cx="19" cy="20.100" r="3" fill="#fff"/></svg>
<svg style="position:absolute;left:2549.5px;top:1770.5px;" width="16" height="24" viewBox="0 0 16 24"><rect x="1.500" y="1.500" width="12" height="20.400" rx="2.600" fill="#d2d2d2" stroke="#4d4d4d" stroke-width="1.900"/><path d="M5.500 3.700H9.500" stroke="#4d4d4d" stroke-width="1.300" stroke-linecap="round"/><path d="M5 19.600H10" stroke="#4d4d4d" stroke-width="1.100" stroke-linecap="round"/></svg>
<svg style="position:absolute;left:2810.2px;top:1768px;" width="28" height="28" viewBox="0 0 28 28"><circle cx="11.200" cy="11.300" r="8.800" fill="none" stroke="#4d4d4d" stroke-width="2.600"/><path d="M17.800 17.900L24.900 25.200" stroke="#4d4d4d" stroke-width="3.400" stroke-linecap="round"/><path d="M7.200 11.300H15.200" stroke="#4d4d4d" stroke-width="2.200" stroke-linecap="round"/></svg>
<svg style="position:absolute;left:2858.2px;top:1768px;" width="28" height="28" viewBox="0 0 28 28"><circle cx="11.200" cy="11.300" r="8.800" fill="none" stroke="#4d4d4d" stroke-width="2.600"/><path d="M17.800 17.900L24.900 25.200" stroke="#4d4d4d" stroke-width="3.400" stroke-linecap="round"/><path d="M8.800 8.800L11.500 7.200V15.500" fill="none" stroke="#4d4d4d" stroke-width="2" stroke-linecap="round" stroke-linejoin="round"/></svg>
<svg style="position:absolute;left:2906.2px;top:1768px;" width="28" height="28" viewBox="0 0 28 28"><circle cx="11.200" cy="11.300" r="8.800" fill="none" stroke="#4d4d4d" stroke-width="2.600"/><path d="M17.800 17.900L24.900 25.200" stroke="#4d4d4d" stroke-width="3.400" stroke-linecap="round"/><rect x="7.600" y="7.700" width="7.200" height="7.200" rx="1.500" fill="none" stroke="#4d4d4d" stroke-width="2.200"/></svg>
<svg style="position:absolute;left:2954.2px;top:1768px;" width="28" height="28" viewBox="0 0 28 28"><circle cx="11.200" cy="11.300" r="8.800" fill="none" stroke="#4d4d4d" stroke-width="2.600"/><path d="M17.800 17.900L24.900 25.200" stroke="#4d4d4d" stroke-width="3.400" stroke-linecap="round"/><path d="M6.900 11.300H15.500M11.200 7V15.600" stroke="#4d4d4d" stroke-width="2.200" stroke-linecap="round"/></svg>
<div style="position:absolute;left:546.5px;top:1832.2px;width:2478px;height:1.5px;background:#dcdcdc;"></div>
<div style="position:absolute;left:546.5px;top:1833.7px;width:2478px;height:55px;background:#ffffff;"></div>
<svg style="position:absolute;left:568.5px;top:1851px;" width="31" height="20" viewBox="0 0 31 20"><path d="M3.500 .8H20.500c1 0 1.700.3 2.400 1l5.600 6.200c.9 1 .9 2.400 0 3.400L22.900 17.500c-.7.700-1.400 1-2.400 1H3.500C1.800 18.500.8 17.500.8 15.800V3.500C.8 1.800 1.800.8 3.500.8z" fill="#2f6ff0"/></svg>
<div style="position:absolute;left:614.2px;top:1849px;width:1.5px;height:23.5px;background:#d9d9d9;"></div>
<svg style="position:absolute;left:636px;top:1848px;" width="20" height="27" viewBox="0 0 20 27"><rect x="1.200" y="1.200" width="4.800" height="24.300" rx="1.500" fill="none" stroke="#747474" stroke-width="1.900"/><rect x="13.600" y="1.200" width="4.800" height="24.300" rx="1.500" fill="none" stroke="#747474" stroke-width="1.900"/></svg>
<svg style="position:absolute;left:692px;top:1849px;" width="28" height="26" viewBox="0 0 28 26"><g fill="none" stroke="#b9b9b9" stroke-width="1.900" stroke-linecap="round" stroke-linejoin="round"><path d="M2 14.500L13.500 3.500L24.500 14.500"/><path d="M18.500 14.500H24.700V8.500"/><rect x="5.500" y="19.500" width="16" height="4.300"/></g></svg>
<svg style="position:absolute;left:755.5px;top:1848px;" width="20" height="27" viewBox="0 0 20 27"><g fill="none" stroke="#b9b9b9" stroke-width="1.900" stroke-linecap="round" stroke-linejoin="round"><path d="M10 1.500V16.500M4 10.800L10 16.800L16 10.800"/><rect x="1.500" y="21" width="17" height="4.300"/></g></svg>
<svg style="position:absolute;left:815.5px;top:1848px;" width="20" height="27" viewBox="0 0 20 27"><g fill="none" stroke="#b9b9b9" stroke-width="1.900" stroke-linecap="round" stroke-linejoin="round"><path d="M10 17V2M4 7.800L10 1.800L16 7.800"/><rect x="1.500" y="21" width="17" height="4.300"/></g></svg>
<div style="position:absolute;left:856.2px;top:1849px;width:1.5px;height:23.5px;background:#d9d9d9;"></div>
<svg style="position:absolute;left:876px;top:1848px;" width="25" height="28" viewBox="0 0 25 28"><g fill="none" stroke="#747474" stroke-width="1.800" stroke-linejoin="round" stroke-linecap="round"><path d="M10 11.500L22.400 6V20.800L10 26.400Z"/><path d="M5.700 23.900V8.400L18.100 2.900"/><path d="M1.300 21.400V6L13.700 .9"/></g></svg>
<svg style="position:absolute;left:934px;top:1848px;" width="28" height="27" viewBox="0 0 28 27"><g fill="none" stroke="#747474" stroke-width="1.900"><circle cx="5.500" cy="5.500" r="3.800"/><circle cx="22.500" cy="13" r="3.800"/><circle cx="5.500" cy="21.500" r="3.800"/><path d="M9 7L19 11.500M9 20L19 14.800"/></g></svg>
<svg style="position:absolute;left:996px;top:1847.8px;" width="24" height="27" viewBox="0 0 24 27"><g fill="none" stroke="#747474" stroke-width="1.900"><rect x="2.100" y="1.200" width="19.800" height="9.600" rx="4.800"/><rect x="2.100" y="15.200" width="19.800" height="9.600" rx="4.800"/></g><circle cx="6.800" cy="6" r="2.600" fill="#747474"/><circle cx="17.200" cy="20" r="2.600" fill="#747474"/></svg>
<svg style="position:absolute;left:1054.5px;top:1847.5px;" width="28" height="28" viewBox="0 0 28 28"><path d="M26 1.500L15.300 25V12.200H2.200Z" fill="none" stroke="#747474" stroke-width="1.900" stroke-linejoin="round"/></svg>
<div style="position:absolute;left:1098.4px;top:1849px;width:1.5px;height:23.5px;background:#d9d9d9;"></div>
<svg style="position:absolute;left:1118px;top:1849.5px;" width="23" height="23" viewBox="0 0 30 30"><rect x="0" y="0" width="30" height="30" rx="6.5" fill="#787878"/><g stroke="#fff" stroke-width="2.1" stroke-linecap="round" fill="none"><path d="M16.2 6.600L9.300 18.600"/><path d="M13.600 8.200L21.300 21.600"/><path d="M6.300 18.600H16.500"/><path d="M20.600 18.600H23.700"/><path d="M8.200 20.600L7.600 21.600"/></g></svg>
<span style="position:absolute;left:1153.7px;top:1849.53px;font-size:23px;line-height:1;color:#262626;font-weight:400;letter-spacing:0.18px;white-space:pre;">EnhancedTodoList</span>
<span style="position:absolute;left:2760.2px;top:1849.95px;font-size:22.5px;line-height:1;color:#8a8a8a;font-weight:400;letter-spacing:0.7px;white-space:pre;-webkit-text-stroke:0.550px #8a8a8a;">Line: 67  Col: 46</span>
<div style="position:absolute;left:2954px;top:1848px;width:1.5px;height:25px;background:#d9d9d9;"></div>
<svg style="position:absolute;left:2971.7px;top:1846.7px;" width="28" height="28" viewBox="0 0 28 28"><rect x="1.800" y="1.800" width="24" height="24" rx="4.500" fill="none" stroke="#7a7a7a" stroke-width="2"/><rect x="5.800" y="16.300" width="16" height="5.700" rx="1.500" fill="#7a7a7a"/></svg>
</div>
</body></html>
